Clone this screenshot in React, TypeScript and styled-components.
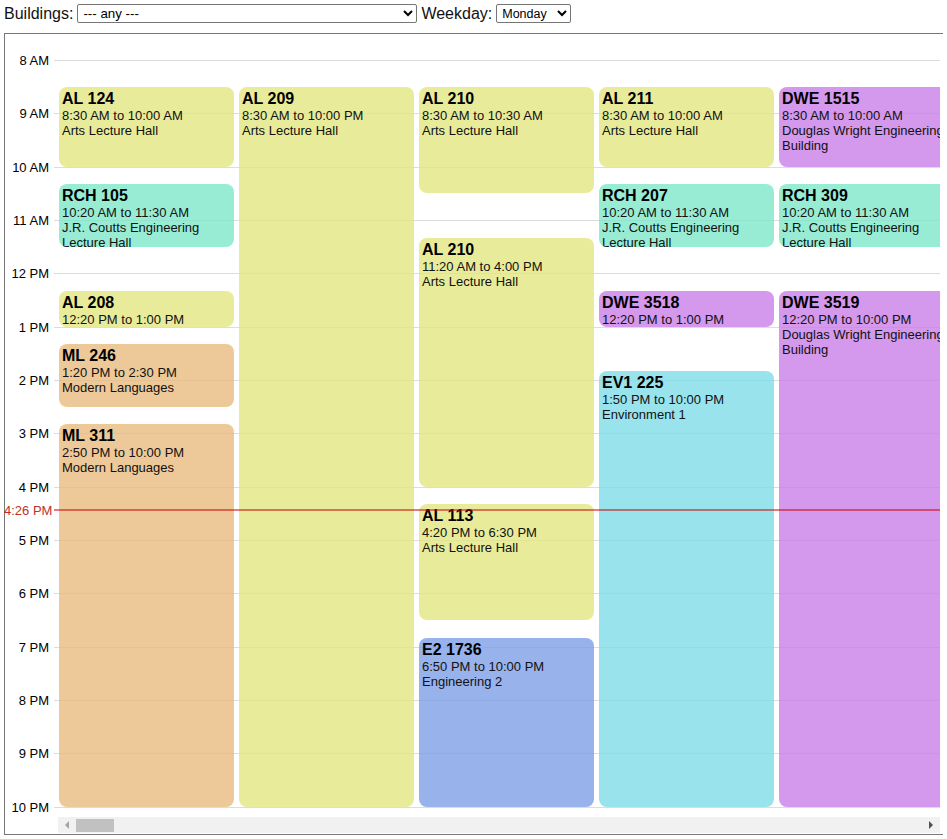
import React from "react";
import styled, { createGlobalStyle } from "styled-components";

const GlobalStyle = createGlobalStyle`
  html, body { padding: 0; background: #fff; }
  body {
    margin: 4px;
    font-family: "Liberation Sans", Arial, sans-serif;
    color: #000;
  }
  * { box-sizing: border-box; }
`;

const HOUR = 160 / 3;
const TOP = 26;
const yOf = (h: number, m: number) => TOP + (h - 8 + m / 60) * HOUR;

const COLORS: Record<string, string> = {
  yellow: "rgba(226, 230, 127, 0.8)",
  orange: "rgba(232, 187, 127, 0.8)",
  blue: "rgba(126, 159, 231, 0.8)",
  cyan: "rgba(127, 220, 231, 0.8)",
  mint: "rgba(127, 231, 201, 0.8)",
  purple: "rgba(201, 126, 231, 0.8)",
};

type Ev = {
  room: string;
  start: [number, number];
  end: [number, number];
  building: string;
  color: keyof typeof COLORS;
};

const AL = "Arts Lecture Hall";
const RCH = "J.R. Coutts Engineering Lecture Hall";
const DWE = "Douglas Wright Engineering Building";
const ML = "Modern Languages";

const lanes: Ev[][] = [
  [
    { room: "AL 124", start: [8, 30], end: [10, 0], building: AL, color: "yellow" },
    { room: "RCH 105", start: [10, 20], end: [11, 30], building: RCH, color: "mint" },
    { room: "AL 208", start: [12, 20], end: [13, 0], building: AL, color: "yellow" },
    { room: "ML 246", start: [13, 20], end: [14, 30], building: ML, color: "orange" },
    { room: "ML 311", start: [14, 50], end: [22, 0], building: ML, color: "orange" },
  ],
  [{ room: "AL 209", start: [8, 30], end: [22, 0], building: AL, color: "yellow" }],
  [
    { room: "AL 210", start: [8, 30], end: [10, 30], building: AL, color: "yellow" },
    { room: "AL 210", start: [11, 20], end: [16, 0], building: AL, color: "yellow" },
    { room: "AL 113", start: [16, 20], end: [18, 30], building: AL, color: "yellow" },
    { room: "E2 1736", start: [18, 50], end: [22, 0], building: "Engineering 2", color: "blue" },
  ],
  [
    { room: "AL 211", start: [8, 30], end: [10, 0], building: AL, color: "yellow" },
    { room: "RCH 207", start: [10, 20], end: [11, 30], building: RCH, color: "mint" },
    { room: "DWE 3518", start: [12, 20], end: [13, 0], building: DWE, color: "purple" },
    { room: "EV1 225", start: [13, 50], end: [22, 0], building: "Environment 1", color: "cyan" },
  ],
  [
    { room: "DWE 1515", start: [8, 30], end: [10, 0], building: DWE, color: "purple" },
    { room: "RCH 309", start: [10, 20], end: [11, 30], building: RCH, color: "mint" },
    { room: "DWE 3519", start: [12, 20], end: [22, 0], building: DWE, color: "purple" },
  ],
  [
    { room: "E5 2004", start: [8, 30], end: [22, 0], building: "Engineering 5", color: "blue" },
  ],
];

const hours = Array.from({ length: 15 }, (_, i) => 8 + i);
const hourLabel = (h: number) =>
  `${h % 12 === 0 ? 12 : h % 12} ${h < 12 ? "AM" : "PM"}`;
const timeLabel = ([h, m]: [number, number]) =>
  `${h % 12 === 0 ? 12 : h % 12}:${String(m).padStart(2, "0")} ${h < 12 ? "AM" : "PM"}`;

const Toolbar = styled.form`
  display: flex;
  align-items: center;
  gap: 4px;
  height: 19px;
  margin: 0;
`;

const FieldLabel = styled.label`
  font-size: 16px;
  color: #111;
  white-space: nowrap;
`;

const Picker = styled.select<{ $w: number; $fs: number }>`
  width: ${(p) => p.$w}px;
  height: 19px;
  font-family: "Liberation Sans", Arial, sans-serif;
  font-size: ${(p) => p.$fs}px;
  color: #000;
  background: #fff;
  border: 1px solid #767676;
  border-radius: 2px;
  padding: 0 0 0 1px;
  margin: 0;
`;

const Frame = styled.div`
  position: relative;
  width: 941px;
  margin-top: 10px;
  border: 1px solid #777;
  display: grid;
  grid-template: 1fr / 1fr;
`;

const Rules = styled.div`
  grid-area: 1 / 1;
  padding: ${TOP}px 4px 0 0;
  display: flex;
  flex-direction: column;
`;

const HourRow = styled.div<{ $last?: boolean }>`
  display: flex;
  align-items: flex-start;
  height: ${(p) => (p.$last ? 0 : HOUR)}px;
`;

const HourLabel = styled.span`
  width: 44px;
  flex: none;
  text-align: right;
  font-size: 13px;
  line-height: 15px;
  margin-top: -7px;
  color: #000;
  white-space: nowrap;
`;

const HourLine = styled.div`
  flex: 1;
  margin-left: 5px;
  border-top: 1px solid #dcdcdc;
`;

const Viewport = styled.div`
  grid-area: 1 / 1;
  margin: 0 4px 1px 53px;
  display: flex;
  flex-direction: column;
  min-width: 0;
`;

const Lanes = styled.div`
  height: 783px;
  display: flex;
  gap: 5px;
  padding-left: 1px;
  overflow: hidden;
`;

const Lane = styled.div`
  position: relative;
  flex: none;
  width: 175px;
`;

const Card = styled.div<{ $bg: string }>`
  position: absolute;
  left: 0;
  right: 0;
  background: ${(p) => p.$bg};
  border-radius: 8px;
  padding: 3px 3px 2px;
  overflow: hidden;
`;

const Room = styled.div`
  font-size: 16px;
  font-weight: bold;
  line-height: 18px;
  color: #000;
`;

const Detail = styled.div`
  font-size: 13px;
  line-height: 15px;
  color: #111;
`;

const ScrollTrack = styled.div`
  height: 16px;
  background: #f1f1f1;
  display: flex;
  align-items: center;
`;

const ArrowLeft = styled.span`
  width: 0;
  height: 0;
  margin-left: 7px;
  border-top: 4px solid transparent;
  border-bottom: 4px solid transparent;
  border-right: 4px solid #a3a3a3;
`;

const ArrowRight = styled.span`
  width: 0;
  height: 0;
  margin-right: 7px;
  border-top: 4px solid transparent;
  border-bottom: 4px solid transparent;
  border-left: 4px solid #505050;
`;

const Thumb = styled.span`
  width: 38px;
  height: 13px;
  margin-left: 7px;
  background: #c1c1c1;
`;

const Spacer = styled.span`
  flex: 1;
`;

const NowMarker = styled.div`
  position: absolute;
  left: -1px;
  right: 4px;
  display: flex;
  align-items: center;
  transform: translateY(-50%);
  pointer-events: none;
`;

const NowLabel = styled.span`
  font-size: 13px;
  line-height: 15px;
  color: #c0302a;
  white-space: nowrap;
`;

const NowLine = styled.div`
  flex: 1;
  height: 1px;
  margin-left: 2px;
  background: #c40000;
`;

export default function App() {
  const now: [number, number] = [16, 26];
  return (
    <>
      <GlobalStyle />
      <Toolbar>
        <FieldLabel htmlFor="buildings">Buildings:</FieldLabel>
        <Picker id="buildings" $w={340} $fs={13.333} defaultValue="any">
          <option value="any">--- any ---</option>
          <option value="AL">AL</option>
          <option value="DWE">DWE</option>
          <option value="RCH">RCH</option>
        </Picker>
        <FieldLabel htmlFor="weekday">Weekday:</FieldLabel>
        <Picker id="weekday" $w={75} $fs={12.5} defaultValue="Monday">
          {["Monday", "Tuesday", "Wednesday", "Thursday", "Friday"].map((d) => (
            <option key={d} value={d}>
              {d}
            </option>
          ))}
        </Picker>
      </Toolbar>
      <Frame>
        <Rules>
          {hours.map((h, i) => (
            <HourRow key={h} $last={i === hours.length - 1}>
              <HourLabel>{hourLabel(h)}</HourLabel>
              <HourLine />
            </HourRow>
          ))}
        </Rules>
        <Viewport>
          <Lanes>
            {lanes.map((lane, li) => (
              <Lane key={li}>
                {lane.map((ev, ei) => {
                  const top = yOf(ev.start[0], ev.start[1]);
                  const bottom = yOf(ev.end[0], ev.end[1]);
                  return (
                    <Card
                      key={ei}
                      $bg={COLORS[ev.color]}
                      style={{ top, height: bottom - top }}
                    >
                      <Room>{ev.room}</Room>
                      <Detail>
                        {timeLabel(ev.start)} to {timeLabel(ev.end)}
                      </Detail>
                      <Detail>{ev.building}</Detail>
                    </Card>
                  );
                })}
              </Lane>
            ))}
          </Lanes>
          <ScrollTrack>
            <ArrowLeft />
            <Thumb />
            <Spacer />
            <ArrowRight />
          </ScrollTrack>
        </Viewport>
        <NowMarker style={{ top: yOf(now[0], now[1]) + 0.5 }}>
          <NowLabel>{timeLabel(now)}</NowLabel>
          <NowLine />
        </NowMarker>
      </Frame>
    </>
  );
}
